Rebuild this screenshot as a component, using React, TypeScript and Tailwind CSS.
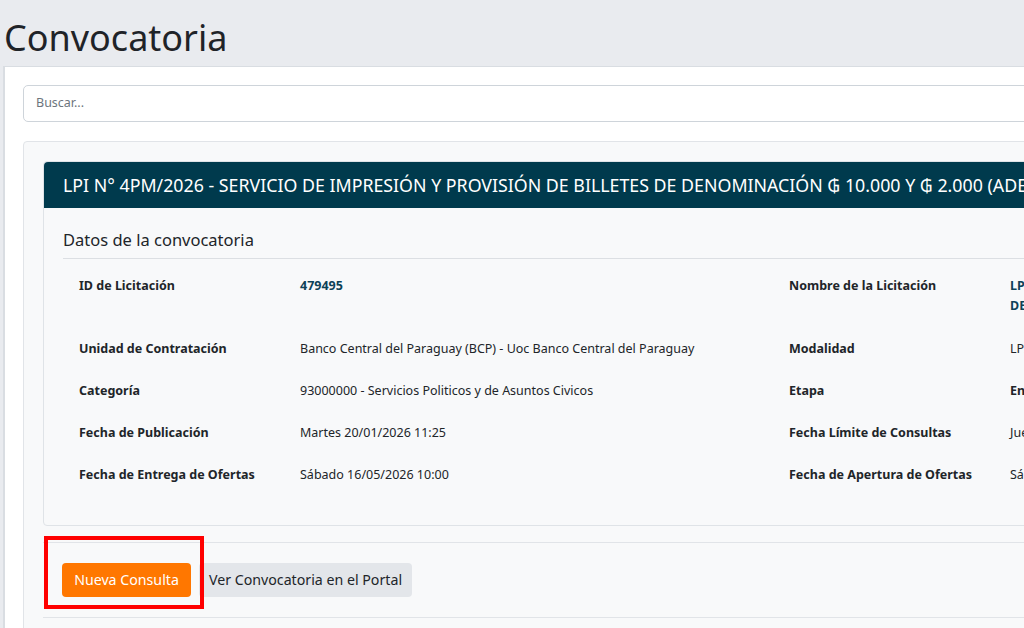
import React from "react";

const rows: [string, React.ReactNode, string, React.ReactNode][] = [
  [
    "ID de Licitación",
    <span className="font-bold text-[#0d4258]">479495</span>,
    "Nombre de la Licitación",
    <span className="font-bold text-[#0d4258]">
      LPI N° 4PM/2026 - SERVICIO DE IMPRESIÓN Y PROVISIÓN
      <br />
      DE BILLETES DE DENOMINACIÓN ₲ 10.000 Y ₲ 2.000
    </span>,
  ],
  [
    "Unidad de Contratación",
    "Banco Central del Paraguay (BCP) - Uoc Banco Central del Paraguay",
    "Modalidad",
    "LPI - Licitación Pública Internacional",
  ],
  [
    "Categoría",
    "93000000 - Servicios Politicos y de Asuntos Civicos",
    "Etapa",
    <span className="font-bold">En Convocatoria</span>,
  ],
  ["Fecha de Publicación", "Martes 20/01/2026 11:25", "Fecha Límite de Consultas", "Jueves 16/04/2026 10:00"],
  ["Fecha de Entrega de Ofertas", "Sábado 16/05/2026 10:00", "Fecha de Apertura de Ofertas", "Sábado 16/05/2026 10:15"],
];

export default function App() {
  return (
    <div
      className="w-[1024px] h-[628px] overflow-hidden bg-[#e9ebef] text-[#212529]"
      style={{ fontFamily: '"Noto Sans", "Open Sans", sans-serif' }}
    >
      <div className="w-[1300px]">
        <h1 className="pl-[4px] pt-[16px] h-[66px] text-[36px] leading-[44px] font-normal text-[#1f2328]">
          Convocatoria
        </h1>
        <div className="ml-[3px] h-[600px] bg-white border-l-2 border-t border-[#d9dde2] pl-[18px] pt-[18px]">
          <div className="h-[37px] rounded-[5px] border border-[#ced4da] bg-white flex items-center pl-[12px] text-[12.5px] text-[#6c757d]">
            Buscar...
          </div>
          <div className="mt-[19px] bg-[#f8f9fa] border border-[#e1e4e8] rounded-[4px] p-[19px]">
            <div className="rounded-[4px] border border-[#dfe3e7] bg-[#f8f9fa]">
              <div className="h-[46px] bg-[#003a4d] rounded-t-[4px] flex items-center pl-[19px] text-white text-[17.8px] whitespace-nowrap">
                LPI N° 4PM/2026 - SERVICIO DE IMPRESIÓN Y PROVISIÓN DE BILLETES DE DENOMINACIÓN ₲ 10.000 Y ₲ 2.000 (ADENDA)
              </div>
              <div className="px-[19px] pt-[20px] pb-[29px]">
                <div className="text-[16.5px] leading-[24px] pb-[6px] border-b border-[#dcdfe3]">
                  Datos de la convocatoria
                </div>
                <div className="mt-[6px] text-[12.5px] leading-[20px]">
                  {rows.map((r, i) => (
                    <div key={i} className="flex py-[11px] first:pb-[12px]">
                      <div className="w-[237px] pl-[16px] font-bold shrink-0">{r[0]}</div>
                      <div className="w-[489px] shrink-0">{r[1]}</div>
                      <div className="w-[221px] font-bold shrink-0">{r[2]}</div>
                      <div className="flex-1 whitespace-nowrap">{r[3]}</div>
                    </div>
                  ))}
                </div>
              </div>
            </div>
            <div className="mt-[16px] border-y border-[#e1e4e8] py-[20px] pl-[19px] flex gap-[8px] relative">
              <button className="h-[34px] w-[129px] rounded-[4px] bg-[#ff7700] text-white text-[14.2px] leading-none">
                Nueva Consulta
              </button>
              <button className="h-[34px] w-[213px] rounded-[4px] bg-[#e3e6ea] text-[#212529] text-[14.2px] leading-none">
                Ver Convocatoria en el Portal
              </button>
              <div className="absolute left-[1px] top-[-7px] w-[160px] h-[73px] border-[4px] border-[#ff0000]" />
            </div>
          </div>
        </div>
      </div>
    </div>
  );
}
